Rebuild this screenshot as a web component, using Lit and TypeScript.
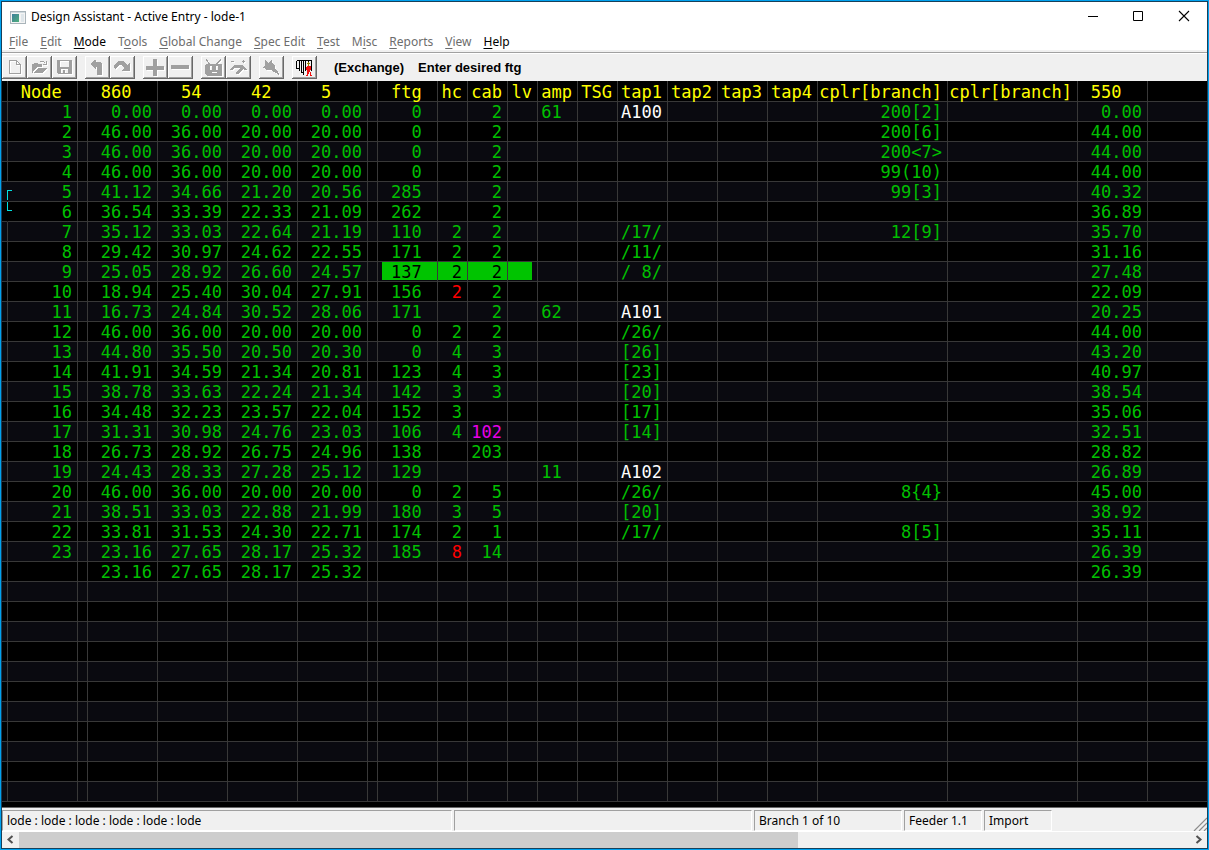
import { LitElement, html, css, svg, nothing } from "lit";
import { customElement, property } from "lit/decorators.js";
import { classMap } from "lit/directives/class-map.js";

type Row = string[];

const COLUMNS: { label: string; width: number | null; trail?: number; cell?: number }[] = [
  { label: "", width: 6 },
  { label: "Node", width: 70, trail: 1 },
  { label: "", width: 10 },
  { label: "860", width: 70, trail: 2 },
  { label: "54", width: 70, trail: 2 },
  { label: "42", width: 70, trail: 2 },
  { label: "5", width: 70, trail: 3 },
  { label: "", width: 10 },
  { label: "ftg", width: 60, trail: 1, cell: 1 },
  { label: "hc", width: 30 },
  { label: "cab", width: 40 },
  { label: "lv", width: 30 },
  { label: "amp", width: 40, cell: 1 },
  { label: "TSG", width: 40 },
  { label: "tap1", width: 50 },
  { label: "tap2", width: 50 },
  { label: "tap3", width: 50 },
  { label: "tap4", width: 50 },
  { label: "cplr[branch]", width: 130 },
  { label: "cplr[branch]", width: 130 },
  { label: "550", width: 70, trail: 2 },
  { label: "", width: null },
];

// node, 860, 54, 42, 5, ftg, hc, cab, amp, tap1, coupler, 550
const NODES: Row[] = [
  ["1", "0.00", "0.00", "0.00", "0.00", "0", "", "2", "61", "A100", "200[2]", "0.00"],
  ["2", "46.00", "36.00", "20.00", "20.00", "0", "", "2", "", "", "200[6]", "44.00"],
  ["3", "46.00", "36.00", "20.00", "20.00", "0", "", "2", "", "", "200<7>", "44.00"],
  ["4", "46.00", "36.00", "20.00", "20.00", "0", "", "2", "", "", "99(10)", "44.00"],
  ["5", "41.12", "34.66", "21.20", "20.56", "285", "", "2", "", "", "99[3]", "40.32"],
  ["6", "36.54", "33.39", "22.33", "21.09", "262", "", "2", "", "", "", "36.89"],
  ["7", "35.12", "33.03", "22.64", "21.19", "110", "2", "2", "", "/17/", "12[9]", "35.70"],
  ["8", "29.42", "30.97", "24.62", "22.55", "171", "2", "2", "", "/11/", "", "31.16"],
  ["9", "25.05", "28.92", "26.60", "24.57", "137", "2", "2", "", "/ 8/", "", "27.48"],
  ["10", "18.94", "25.40", "30.04", "27.91", "156", "!2", "2", "", "", "", "22.09"],
  ["11", "16.73", "24.84", "30.52", "28.06", "171", "", "2", "62", "A101", "", "20.25"],
  ["12", "46.00", "36.00", "20.00", "20.00", "0", "2", "2", "", "/26/", "", "44.00"],
  ["13", "44.80", "35.50", "20.50", "20.30", "0", "4", "3", "", "[26]", "", "43.20"],
  ["14", "41.91", "34.59", "21.34", "20.81", "123", "4", "3", "", "[23]", "", "40.97"],
  ["15", "38.78", "33.63", "22.24", "21.34", "142", "3", "3", "", "[20]", "", "38.54"],
  ["16", "34.48", "32.23", "23.57", "22.04", "152", "3", "", "", "[17]", "", "35.06"],
  ["17", "31.31", "30.98", "24.76", "23.03", "106", "4", "*102", "", "[14]", "", "32.51"],
  ["18", "26.73", "28.92", "26.75", "24.96", "138", "", "203", "", "", "", "28.82"],
  ["19", "24.43", "28.33", "27.28", "25.12", "129", "", "", "11", "A102", "", "26.89"],
  ["20", "46.00", "36.00", "20.00", "20.00", "0", "2", "5", "", "/26/", "8{4}", "45.00"],
  ["21", "38.51", "33.03", "22.88", "21.99", "180", "3", "5", "", "[20]", "", "38.92"],
  ["22", "33.81", "31.53", "24.30", "22.71", "174", "2", "1", "", "/17/", "8[5]", "35.11"],
  ["23", "23.16", "27.65", "28.17", "25.32", "185", "!8", "14", "", "", "", "26.39"],
  ["", "23.16", "27.65", "28.17", "25.32", "", "", "", "", "", "", "26.39"],
];
const ROW_COUNT = 35;
const FIELD_COLUMNS = [1, 3, 4, 5, 6, 8, 9, 10, 12, 14, 18, 20];

@customElement("node-grid")
export class NodeGrid extends LitElement {
  @property({ type: Number }) active = 9;

  static styles = css`
    :host {
      display: block;
      background: #000;
      overflow: hidden;
    }
    .grid {
      width: 100%;
      table-layout: fixed;
      border-collapse: separate;
      border-spacing: 0;
      color: #00c000;
      font: 17px/18px "DejaVu Sans Mono", "Liberation Mono", monospace;
    }
    .head,
    .cell {
      box-sizing: border-box;
      height: 20px;
      padding: 1px 5px 0 0;
      border: 0 solid #383838;
      border-width: 0 1px 1px 0;
      text-align: right;
      white-space: pre;
      font-weight: 400;
    }
    .head {
      height: 21px;
      padding-top: 2px;
      color: #ff0;
    }
    .edge {
      padding: 0;
    }
    .cell:last-child,
    .head:last-child {
      border-right: 0;
    }
    .row:nth-child(odd) {
      background: #0a0a10;
    }
    .alert {
      color: #f00;
    }
    .special {
      color: #e800e8;
    }
    .name {
      color: #fff;
    }
    .picked {
      color: #000;
      background: linear-gradient(#00c400, #00c400) 0 0 / 100% 18px no-repeat padding-box;
    }
    .picked-first {
      background-position: 4px 0;
    }
    .picked-last {
      background-size: calc(100% - 5px) 18px;
    }
    .branch {
      position: relative;
      border-right-color: transparent;
    }
    .branch::after {
      content: "";
      position: absolute;
      left: 5px;
      z-index: 1;
      width: 4px;
      height: 9px;
      border: 0 solid #00e0e0;
      border-left-width: 1px;
    }
    .branch-start::after {
      bottom: 1px;
      border-top-width: 1px;
    }
    .branch-end::after {
      top: 0;
      height: 8px;
      border-bottom-width: 1px;
    }
  `;

  private row(index: number) {
    const fields = NODES[index];
    const number = index + 1;
    return html`<tr class="row">
      ${COLUMNS.map((column, c) => {
        const at = FIELD_COLUMNS.indexOf(c);
        let text = fields && at >= 0 ? fields[at] : "";
        const alert = text.startsWith("!");
        const special = text.startsWith("*");
        if (alert || special) text = text.slice(1);
        const picked = number === this.active && c >= 8 && c <= 11;
        const branch = c === 0 && (number === 5 || number === 6);
        const classes = {
          cell: true,
          edge: column.width !== null && column.width <= 10,
          alert,
          special,
          name: c === 14 && text.startsWith("A"),
          picked,
          "picked-first": picked && c === 8,
          "picked-last": picked && c === 11,
          branch,
          "branch-start": branch && number === 5,
          "branch-end": branch && number === 6,
        };
        return html`<td class=${classMap(classes)}>${text ? text + " ".repeat(column.cell ?? 0) : nothing}</td>`;
      })}
    </tr>`;
  }

  render() {
    return html`<table class="grid">
      <colgroup>
        ${COLUMNS.map((c) => (c.width ? html`<col width=${c.width} />` : html`<col />`))}
      </colgroup>
      <thead>
        <tr>
          ${COLUMNS.map(
            (c) => html`<th scope="col" class=${classMap({ head: true, edge: !c.label })}>${c.label + " ".repeat(c.trail ?? 0)}</th>`
          )}
        </tr>
      </thead>
      <tbody>
        ${Array.from({ length: ROW_COUNT }, (_, i) => this.row(i))}
      </tbody>
    </table>`;
  }
}

const ICONS: Record<string, unknown> = {
  new: svg`<path d="M7.5 4.5h7l4 4v9h-11zM14.500 4.500v4h4" fill="none" stroke="#a0a0a0"/>`,
  open: svg`<path d="M5 8h1l1-1h3l1 1h4v3h-5l-4 5v1h-1zM7 17l4-5h9l-4 5z" fill="#a0a0a0"/><path d="M12.500 6.500l1-1h3l2 2M19.500 5v3.500h-3.500" fill="none" stroke="#a0a0a0"/>`,
  save: svg`<path d="M5 4h15v14h-14l-1-1zM8 5v6h9v-6zM9 13v4h2v-3h2v3h3v-4z" fill="#a0a0a0" fill-rule="evenodd"/>`,
  undo: svg`<path d="M5 8l5-4h1v2h4l2 2v11h-5v-8h-1v2h-1z" fill="#a0a0a0"/>`,
  redo: svg`<path d="M4 11v-2l4-4h5l4 4 3-2v8h-8v-1l2-2-3-3h-2l-3 4h-1z" fill="#a0a0a0"/>`,
  add: svg`<path d="M10 3h4v7h7v4h-7v6h-4v-6h-7v-4h7z" fill="#a0a0a0"/>`,
  remove: svg`<path d="M3 9h18v4h-18z" fill="#a0a0a0"/>`,
  amp: svg`<path d="M5 3.500l4 5M20 3.500l-5 5" stroke="#a0a0a0" stroke-width="1.200"/><path d="M5 8h16v11l-1 1h-14l-2-2v-8zM9 10v4h2v-4zM15 10v4h2v-4zM11 16v1h5v-1z" fill="#a0a0a0" fill-rule="evenodd"/>`,
  tap: svg`<path d="M5 5h3v1h-3zM17 4h1v1h1v1h-1v1h-1v-1h-1v-1h1zM4 13l3-3 2-1h7l5 4v1h-2l-2-1-5 5h-2v-2l4-4h-5l-3 2h-2z" fill="#a0a0a0"/>`,
  plug: svg`<path d="M6 4h1l2 3 2-1 1-2h1v3l3 3v3l3 2 1 3v1h-1l-2-2-3-1-2-2h-4l-3-2h-1v-1l2-1v-3z" fill="#a0a0a0"/>`,
  exit: svg`<path d="M4.500 4.500h15v10M4.500 4.500v8h2M7.500 5v10M9.500 5v12M11.500 5v14M9 16h3M11 18h1M13.500 5v10M16.500 5v2" fill="none" stroke="#000"/><path d="M15 10h3l1 1v3h-1v2h1v3h1v1h-2v-4h-1v2h-1v2h-2v-1h1v-5h-1v-3h1z" fill="#f01010"/><path d="M16 6h1v1h1v1h-1v2h-1v-2h-1v-1h1z" fill="#908000"/>`,
};

const TOOL_GROUPS: [string, string][][] = [
  [["new", "New"], ["open", "Open"], ["save", "Save"]],
  [["undo", "Undo"], ["redo", "Redo"]],
  [["add", "Insert"], ["remove", "Delete"]],
  [["amp", "Amplifier"], ["tap", "Tap"]],
  [["plug", "Power"]],
  [["exit", "Exit"]],
];

// label, index of the underlined letter, enabled
const MENUS: [string, number, boolean][] = [
  ["File", 0, false],
  ["Edit", 0, false],
  ["Mode", 0, true],
  ["Tools", 1, false],
  ["Global Change", 0, false],
  ["Spec Edit", 0, false],
  ["Test", 0, false],
  ["Misc", 1, false],
  ["Reports", 0, false],
  ["View", 0, false],
  ["Help", 0, true],
];

@customElement("app-root")
export class AppRoot extends LitElement {
  @property({ type: Number }) scrollSize = 66.5;

  static styles = css`
    :host {
      display: block;
      font: 12px/16px "Noto Sans", "Open Sans", sans-serif;
      color: #000;
    }
    .window {
      box-sizing: border-box;
      min-height: 100vh;
      display: flex;
      flex-direction: column;
      border: 1px solid #00a2f0;
      outline: 1px solid #17405a;
      outline-offset: -2px;
      padding: 1px;
      background: #f0f0f0;
    }
    button {
      font: inherit;
      color: inherit;
      margin: 0;
      padding: 0;
      border: 0;
      background: none;
    }
    .title-bar {
      display: flex;
      align-items: center;
      height: 30px;
      padding-left: 8px;
      background: #fff;
    }
    .title {
      flex: 1;
      margin: 0;
      padding-left: 5px;
      font-size: 12px;
      font-weight: 400;
    }
    .control {
      width: 46px;
      height: 30px;
    }
    .control svg,
    .tool svg {
      display: block;
    }
    .menu-bar {
      display: flex;
      gap: 12px;
      height: 16px;
      padding: 2px 7px 0;
      background: #fff;
    }
    .menu {
      white-space: nowrap;
    }
    .menu:disabled {
      color: #6d6d6d;
    }
    .menu u {
      text-underline-offset: 2px;
    }
    .tool-bar {
      display: flex;
      align-items: center;
      gap: 8px;
      height: 27px;
      border-top: 2px solid #f0f0f0;
      box-shadow: inset 0 1px #a0a0a0, inset 0 2px #fff;
      padding-top: 2px;
    }
    .tool-group {
      display: flex;
    }
    .tool {
      box-sizing: border-box;
      width: 25px;
      height: 23px;
      box-shadow: inset -1px -1px #696969, inset 1px 1px #fff, inset -2px -2px #a0a0a0;
    }
    .tool:disabled svg {
      filter: drop-shadow(1px 1px 0 #fff);
    }
    .prompt {
      display: flex;
      gap: 14px;
      margin: 0;
      padding-left: 9px;
      font: bold 13px/16px "Liberation Sans", Arial, sans-serif;
    }
    .grid {
      flex: 1;
    }
    .status-bar {
      display: flex;
      gap: 2px;
      height: 21px;
      padding-top: 2px;
      border-top: 1px solid #696969;
    }
    .panel {
      box-sizing: border-box;
      padding: 2px 4px 0;
      border: 1px solid #fff;
      border-top-color: #a0a0a0;
      border-left-color: #a0a0a0;
      white-space: nowrap;
    }
    .path {
      width: 450px;
    }
    .message {
      width: 298px;
    }
    .position {
      width: 148px;
    }
    .feeder {
      width: 78px;
    }
    .source {
      width: 68px;
    }
    .grip {
      margin-left: auto;
      align-self: flex-end;
    }
    .scroll-bar {
      display: flex;
      height: 16px;
      border-top: 1px solid #fff;
      background: #f0f0f0;
    }
    .scroll-button {
      width: 17px;
      height: 15px;
    }
    .scroll-button svg {
      display: block;
      margin: auto;
    }
    .track {
      flex: 1;
    }
    .thumb {
      height: 100%;
      background: #cdcdcd;
    }
  `;

  private menu([label, mark, enabled]: [string, number, boolean]) {
    return html`<button class="menu" role="menuitem" ?disabled=${!enabled}>${label.slice(0, mark)}<u>${label[mark]}</u>${label.slice(mark + 1)}</button>`;
  }

  render() {
    return html`<div class="window">
      <header class="title-bar">
        <svg width="16" height="13" viewBox="0 0 16 13" aria-hidden="true">
          <defs>
            <linearGradient id="pane" x1="0" y1="0" x2="1" y2="1">
              <stop offset="0" stop-color="#3d7f9c" />
              <stop offset="1" stop-color="#4fae7c" />
            </linearGradient>
          </defs>
          <rect x=".5" y=".5" width="15" height="12" fill="#f4f4f4" stroke="#a9b4ba" />
          <path d="M1 1h14v1h-14z" fill="#d0dadf" />
          <rect x="2" y="3" width="7" height="8" fill="url(#pane)" />
          <path d="M11 3h3v8h-3z" fill="#dfe6ea" />
        </svg>
        <h1 class="title">Design Assistant - Active Entry - lode-1</h1>
        <button class="control" aria-label="Minimize">
          <svg width="46" height="30" viewBox="0 0 46 30"><path d="M19 14.500h10" stroke="#000" /></svg>
        </button>
        <button class="control" aria-label="Maximize">
          <svg width="46" height="30" viewBox="0 0 46 30"><path d="M18.500 9.500h9v9h-9z" fill="none" stroke="#000" /></svg>
        </button>
        <button class="control" aria-label="Close">
          <svg width="46" height="30" viewBox="0 0 46 30"><path d="M18 9l10 10M28 9l-10 10" stroke="#000" stroke-width="1.100" /></svg>
        </button>
      </header>
      <nav class="menu-bar" role="menubar">${MENUS.map((m) => this.menu(m))}</nav>
      <div class="tool-bar" role="toolbar">
        ${TOOL_GROUPS.map(
          (group) => html`<div class="tool-group">
            ${group.map(
              ([icon, label]) => html`<button class="tool" aria-label=${label} ?disabled=${icon !== "exit"}>
                <svg width="25" height="23" viewBox="0 0 25 23" shape-rendering="crispEdges">${ICONS[icon]}</svg>
              </button>`
            )}
          </div>`
        )}
        <p class="prompt"><span>(Exchange)</span><span>Enter desired ftg</span></p>
      </div>
      <node-grid class="grid"></node-grid>
      <footer class="status-bar">
        <div class="panel path">lode : lode : lode : lode : lode : lode</div>
        <div class="panel message"></div>
        <div class="panel position">Branch 1 of 10</div>
        <div class="panel feeder">Feeder 1.1</div>
        <div class="panel source">Import</div>
        <svg class="grip" width="14" height="14" viewBox="0 0 14 14" aria-hidden="true">
          <path d="M1 14l13-13M6 14l8-8M11 14l3-3" stroke="#8c8c8c" stroke-width="1.200" />
        </svg>
      </footer>
      <div class="scroll-bar">
        <button class="scroll-button" aria-label="Scroll left">
          <svg width="9" height="9" viewBox="0 0 9 9"><path d="M6.500 1l-4 3.500 4 3.500" fill="none" stroke="#505050" stroke-width="2" /></svg>
        </button>
        <div class="track"><div class="thumb" style="width:${this.scrollSize}%"></div></div>
        <button class="scroll-button" aria-label="Scroll right">
          <svg width="9" height="9" viewBox="0 0 9 9"><path d="M2.500 1l4 3.500-4 3.500" fill="none" stroke="#505050" stroke-width="2" /></svg>
        </button>
      </div>
    </div>`;
  }
}
